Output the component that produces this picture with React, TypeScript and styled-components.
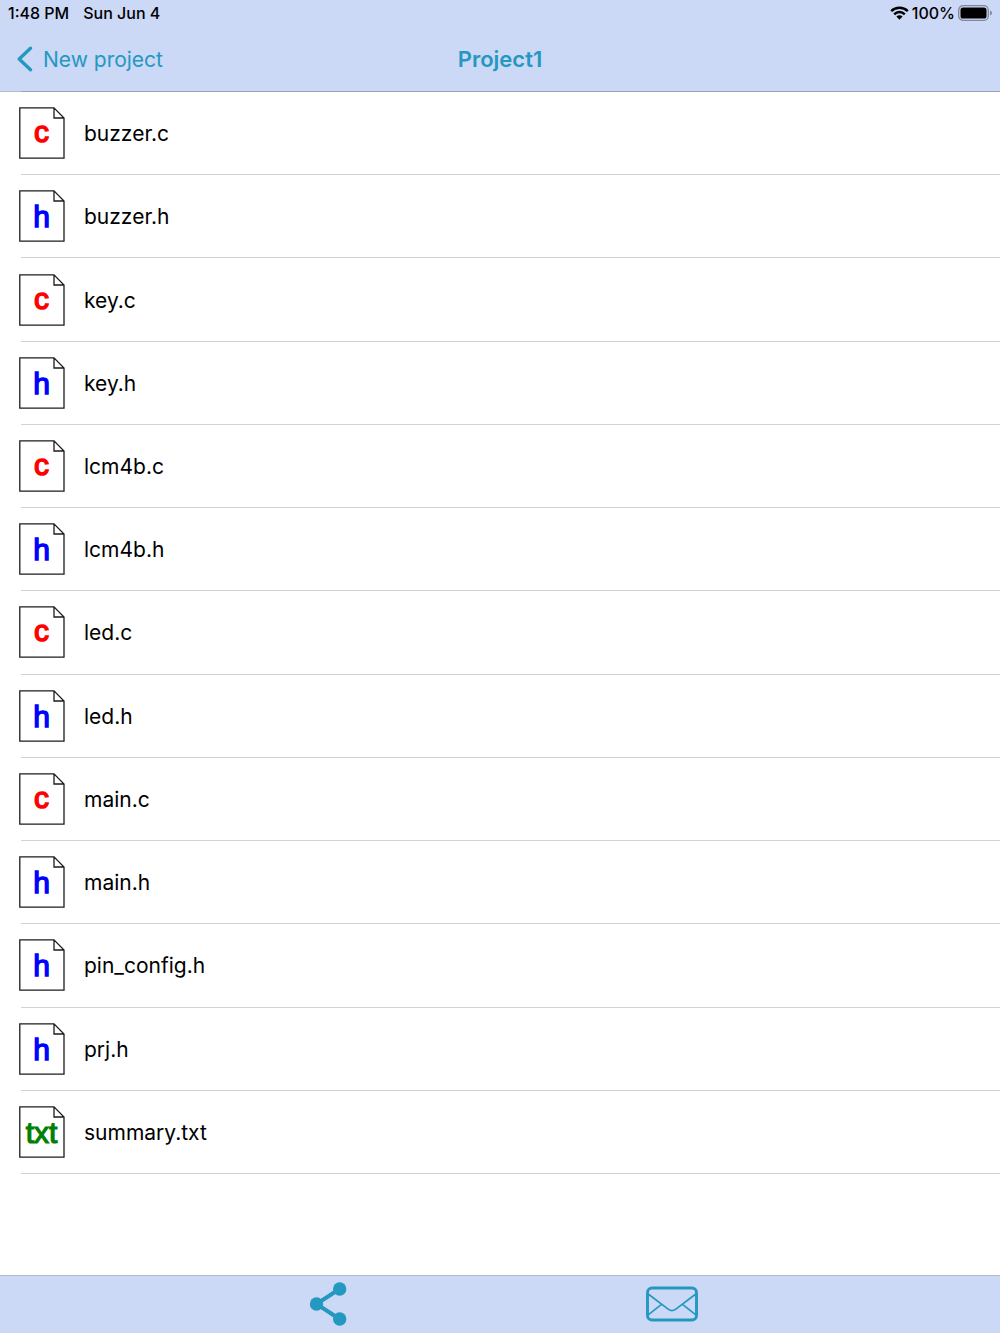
import React from 'react';
import styled, { createGlobalStyle } from 'styled-components';

const ACCENT = '#2498c1';
const BAR = '#cbd8f6';

const GlobalStyle = createGlobalStyle`
  *, *::before, *::after { box-sizing: border-box; }
  body {
    margin: 0;
    background: #fff;
    color: #000;
    font-family: Inter, "Liberation Sans", sans-serif;
  }
  button { font: inherit; color: inherit; background: none; border: 0; padding: 0; cursor: pointer; }
`;

const Screen = styled.div`
  display: flex;
  flex-direction: column;
  min-height: 100vh;
`;

const TopBar = styled.header`
  position: relative;
  background: ${BAR};
  border-bottom: 1px solid #b3bbcd;
  &::after {
    content: '';
    position: absolute;
    left: 21px;
    right: 0;
    bottom: -1px;
    height: 1px;
    background: #98a1b6;
  }
`;

const StatusBar = styled.div`
  display: flex;
  align-items: center;
  justify-content: space-between;
  height: 26px;
  padding: 0 8px;
  font-size: 16px;
  font-weight: 500;
  line-height: 26px;
`;

const StatusGroup = styled.div<{ $gap: number }>`
  display: flex;
  align-items: center;
  gap: ${({ $gap }) => $gap}px;
`;

const NavBar = styled.nav`
  display: grid;
  grid-template-columns: 1fr auto 1fr;
  align-items: center;
  height: 65px;
  padding: 0 16px;
  color: ${ACCENT};
`;

const BackButton = styled.button`
  display: flex;
  align-items: center;
  justify-self: start;
  gap: 10px;
`;

const Label = styled.span`
  padding-top: 1px;
  font-size: 21px;
`;

const Title = styled.h1`
  margin: 0;
  font-size: 22px;
  font-weight: 600;
`;

const FileList = styled.ul`
  flex: 1;
  display: grid;
  grid-auto-rows: minmax(83px, 1fr);
  margin: 0;
  padding: 0 0 101px;
  list-style: none;
`;

const FileItem = styled.li`
  position: relative;
  display: flex;
  padding-bottom: 1px;
  &::after {
    content: '';
    position: absolute;
    left: 21px;
    right: 0;
    bottom: 0;
    height: 1px;
    background: #d2d2d4;
  }
`;

const FileButton = styled.button`
  flex: 1;
  display: flex;
  align-items: center;
  gap: 19px;
  padding: 0 19px;
  text-align: left;
`;

const FileIcon = styled.svg`
  flex: none;
  width: 46px;
  height: 52px;
`;

const IconLabel = styled.text`
  font-family: "Liberation Sans", Arial, sans-serif;
  font-size: 30px;
  text-anchor: middle;
`;

const Toolbar = styled.footer`
  display: grid;
  grid-template-columns: 1fr 1fr;
  align-items: center;
  height: 58px;
  padding: 0 156px 2px;
  background: ${BAR};
  border-top: 1px solid #b3bbcd;
  color: ${ACCENT};
`;

const ToolButton = styled.button`
  display: flex;
  justify-self: center;
`;

type Kind = 'c' | 'h' | 'txt';

const LABELS: Record<Kind, { color: string; weight: number; baseline: number }> = {
  c: { color: '#ff0000', weight: 1.5, baseline: 35 },
  h: { color: '#0000ff', weight: 1.4, baseline: 36.5 },
  txt: { color: '#008000', weight: 1.2, baseline: 36.5 },
};

const FILES = [
  'buzzer.c', 'buzzer.h', 'key.c', 'key.h', 'lcm4b.c', 'lcm4b.h', 'led.c',
  'led.h', 'main.c', 'main.h', 'pin_config.h', 'prj.h', 'summary.txt',
];

function DocumentIcon({ kind }: { kind: Kind }) {
  const { color, weight, baseline } = LABELS[kind];
  return (
    <FileIcon viewBox="0 0 46 52" aria-hidden="true">
      <path d="M.8 .8H35L45 11V51.2H.8Z M35 .8V11H45" fill="#fff" stroke="#1c1c1c" strokeWidth="1.3" />
      <IconLabel x="22.5" y={baseline} fill={color} stroke={color} strokeWidth={weight}>{kind}</IconLabel>
    </FileIcon>
  );
}

export default function App() {
  return (
    <>
      <GlobalStyle />
      <Screen>
        <TopBar>
          <StatusBar>
            <StatusGroup $gap={14}>
              <span>1:48 PM</span>
              <span>Sun Jun 4</span>
            </StatusGroup>
            <StatusGroup $gap={3}>
              <svg width="19" height="14" viewBox="0 0 19 14" aria-hidden="true">
                <g fill="none" stroke="#000" strokeWidth="2.5">
                  <path d="M1.2 5.1A11.8 11.8 0 0 1 17.8 5.1" />
                  <path d="M4.2 8.3A7.5 7.5 0 0 1 14.8 8.3" />
                </g>
                <path d="M6.4 10.6A4.4 4.4 0 0 1 12.6 10.6L9.5 13.7Z" />
              </svg>
              <span>100%</span>
              <svg width="34" height="16" viewBox="0 0 34 16" aria-hidden="true">
                <rect x=".7" y=".7" width="29.6" height="14.6" rx="4.4" fill="none" stroke="#7f8799" strokeWidth="1.3" />
                <rect x="2.5" y="2.5" width="26" height="11" rx="2.6" />
                <path d="M32 5.5Q34 6.2 34 8T32 10.5Z" fill="#7f8799" />
              </svg>
            </StatusGroup>
          </StatusBar>
          <NavBar>
            <BackButton type="button">
              <svg width="17" height="26" viewBox="0 0 17 26" aria-hidden="true">
                <path d="M14.5 2.2L3.2 13L14.5 23.8" fill="none" stroke="currentColor" strokeWidth="3.3" strokeLinecap="round" strokeLinejoin="round" />
              </svg>
              <Label>New project</Label>
            </BackButton>
            <Title>Project1</Title>
          </NavBar>
        </TopBar>
        <FileList>
          {FILES.map((name) => (
            <FileItem key={name}>
              <FileButton type="button">
                <DocumentIcon kind={name.split('.')[1] as Kind} />
                <Label>{name}</Label>
              </FileButton>
            </FileItem>
          ))}
        </FileList>
        <Toolbar>
          <ToolButton type="button" aria-label="Share">
            <svg width="38" height="44" viewBox="0 0 38 44">
              <path d="M30.5 7L7.5 22L30.5 37" fill="none" stroke="currentColor" strokeWidth="4" />
              <g fill="currentColor">
                <circle cx="30.7" cy="7" r="6.7" />
                <circle cx="7.5" cy="22" r="6.7" />
                <circle cx="30.7" cy="37" r="6.7" />
              </g>
            </svg>
          </ToolButton>
          <ToolButton type="button" aria-label="Mail">
            <svg width="52" height="36" viewBox="0 0 52 36" fill="none" stroke="currentColor">
              <rect x="1.5" y="2" width="49" height="32" rx="4.5" strokeWidth="2.9" />
              <path d="M2.5 8.3L22.5 23.4Q26 26 29.5 23.4L49.5 8.3M2.5 28.6L15.5 18.3M49.5 28.6L36.5 18.3" strokeWidth="1.7" />
            </svg>
          </ToolButton>
        </Toolbar>
      </Screen>
    </>
  );
}
